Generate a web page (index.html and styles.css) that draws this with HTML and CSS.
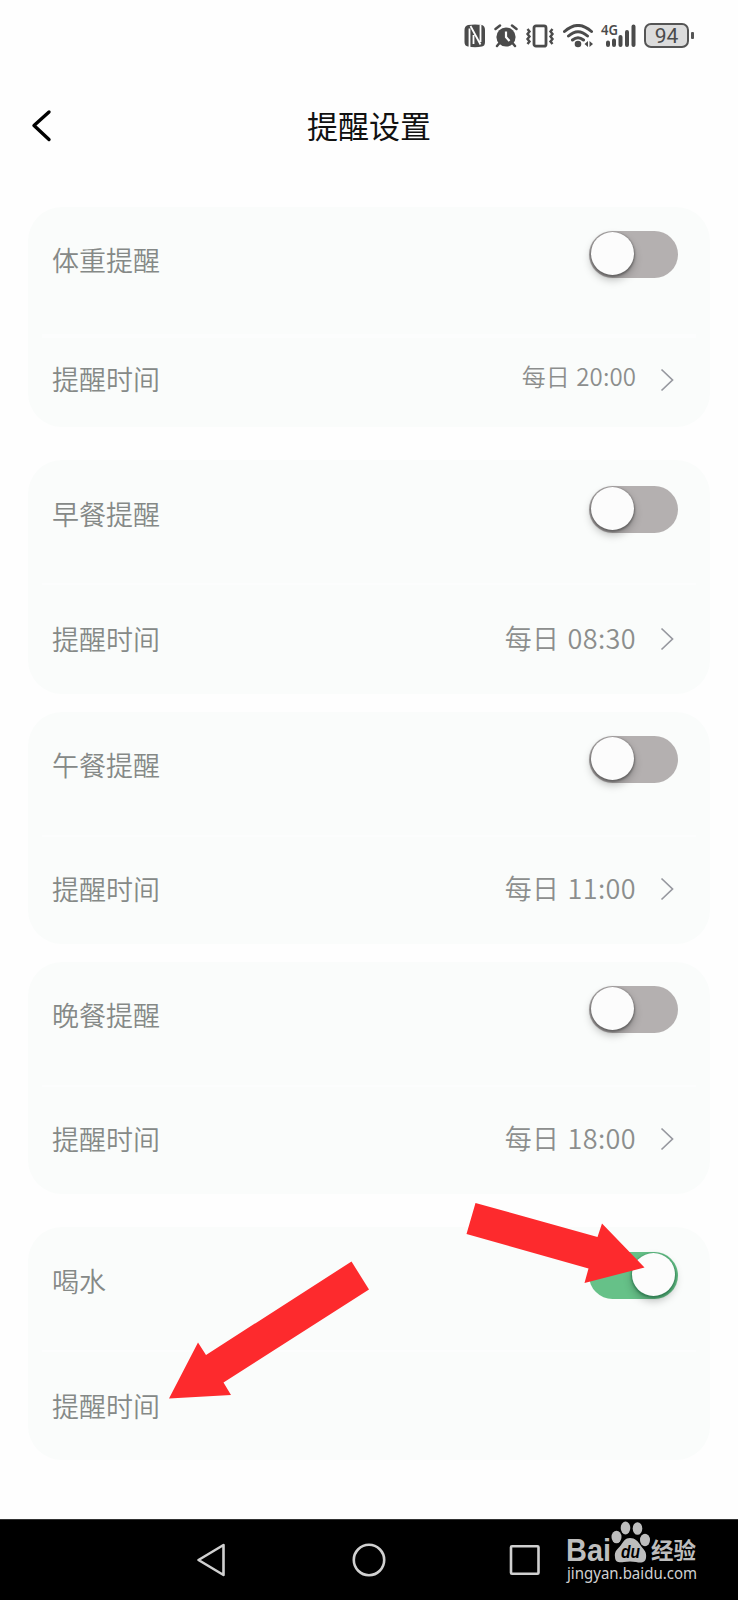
FILE: index.html
```html
<!DOCTYPE html>
<html lang="zh-CN">
<head>
<meta charset="utf-8">
<title>提醒设置</title>
<link rel="stylesheet" href="styles.css">
</head>
<body>
<div class="screen">
  <div class="status">
    <svg class="nfc" width="22" height="24" viewBox="0 0 22 24">
      <path class="ink" d="M4 1 Q11 0 18 1 Q21 2 21 6 V18 Q21 22 18 22.500 Q11 24 4 22.500 Q0.500 22 0.500 18 V6 Q0.500 2 4 1Z"/>
      <path class="gap" d="M5.500 4.500 V23 M6.500 2 L16.500 20.500 M16.500 1 V18 M9.500 11 V20"/>
    </svg>
    <svg class="alarm" width="24" height="24" viewBox="0 0 24 24">
      <circle class="ink" cx="12" cy="13" r="9.600"/>
      <path class="stroke" d="M1.500 5 L6 1.500 M22.500 5 L18 1.500 M5.500 19 L3 22 M18.500 19 L21 22"/>
      <path class="hand" d="M12 7.500 V13 L15.500 17"/>
    </svg>
    <svg class="vibrate" width="30" height="24" viewBox="0 0 30 24">
      <rect class="frame" x="9" y="1.800" width="12" height="20.400" rx="2"/>
      <path class="wave" d="M2.500 5 L4.500 7.500 L2.500 10 L4.500 12.500 L2.500 15 L4.500 17.500 L2.500 20 M27.500 5 L25.500 7.500 L27.500 10 L25.500 12.500 L27.500 15 L25.500 17.500 L27.500 20"/>
    </svg>
    <svg class="wifi" width="31" height="24" viewBox="0 0 31 24">
      <path class="arc" d="M1.500 7.500 Q15 -4.500 28.500 7.500 M5.500 12 Q15 3.500 24.500 12 M9.500 16 Q15 11.500 20.500 16"/>
      <circle class="ink" cx="15" cy="20" r="3.300"/>
      <path class="ink" d="M21.500 20 L25 17 V23Z M30 20 L26.500 17 V23Z"/>
    </svg>
    <svg class="signal" width="36" height="26" viewBox="0 -2 36 26">
      <text class="net" x="0" y="10.500" textLength="17" lengthAdjust="spacingAndGlyphs">4G</text>
      <path class="bars" d="M7 18.500 V21 M13 16.500 V21 M19.500 13 V21 M26 8 V21 M32.500 2.500 V21"/>
    </svg>
    <div class="battery">94</div>
  </div>
  <header class="head">
    <svg class="back" width="22" height="34" viewBox="0 0 22 34"><path d="M18 3 L3 16.500 L18 30.500"/></svg>
    <h1>提醒设置</h1>
  </header>

  <main class="cards">
    <section class="card weight">
      <div class="row top"><span class="label">体重提醒</span><span class="toggle"><i></i></span></div>
      <div class="row time"><span class="label">提醒时间</span><span class="value small">每日 20:00</span><svg class="chev" width="14" height="24" viewBox="0 0 14 24"><path d="M1.500 1.500 L12.500 12 L1.500 22.500"/></svg></div>
    </section>
    <section class="card breakfast">
      <div class="row top"><span class="label">早餐提醒</span><span class="toggle"><i></i></span></div>
      <div class="row time"><span class="label">提醒时间</span><span class="value">每日 08:30</span><svg class="chev" width="14" height="24" viewBox="0 0 14 24"><path d="M1.500 1.500 L12.500 12 L1.500 22.500"/></svg></div>
    </section>
    <section class="card lunch">
      <div class="row top"><span class="label">午餐提醒</span><span class="toggle"><i></i></span></div>
      <div class="row time"><span class="label">提醒时间</span><span class="value">每日 11:00</span><svg class="chev" width="14" height="24" viewBox="0 0 14 24"><path d="M1.500 1.500 L12.500 12 L1.500 22.500"/></svg></div>
    </section>
    <section class="card dinner">
      <div class="row top"><span class="label">晚餐提醒</span><span class="toggle"><i></i></span></div>
      <div class="row time"><span class="label">提醒时间</span><span class="value">每日 18:00</span><svg class="chev" width="14" height="24" viewBox="0 0 14 24"><path d="M1.500 1.500 L12.500 12 L1.500 22.500"/></svg></div>
    </section>
    <section class="card water">
      <div class="row top"><span class="label">喝水</span><span class="toggle on"><i></i></span></div>
      <div class="row time"><span class="label">提醒时间</span></div>
    </section>
  </main>

  <nav class="nav">
    <svg width="32" height="36" viewBox="0 0 32 36"><path d="M28.500 3 V33 L3.500 18Z"/></svg>
    <svg width="36" height="36" viewBox="0 0 36 36"><circle cx="18" cy="18" r="15.200"/></svg>
    <svg width="32" height="36" viewBox="0 0 32 36"><rect x="2" y="4.200" width="27.500" height="27.500" rx="1"/></svg>
  </nav>

  <svg class="arrows" width="738" height="1600" viewBox="0 0 738 1600">
    <path d="M475.500 1203 L597.500 1237 L602 1223.500 L644.500 1267.500 L584.500 1283 L588.500 1268.500 L466.500 1234Z"/>
    <path d="M351.500 1261.500 L369 1289.500 L223.500 1382.500 L231 1395 L169 1398.500 L198 1342.500 L206 1355Z"/>
  </svg>

  <svg class="mark" width="140" height="72" viewBox="0 0 140 72">
    <text class="bai" x="3" y="41" textLength="45" lengthAdjust="spacingAndGlyphs">Bai</text>
    <ellipse cx="53.500" cy="17" rx="5" ry="6.300"/>
    <ellipse cx="62.500" cy="8" rx="4.800" ry="6.500"/>
    <ellipse cx="74.500" cy="8.500" rx="4.800" ry="6.300"/>
    <ellipse cx="82" cy="20" rx="5" ry="6.200"/>
    <path d="M67 18 C72 18 75 21 78 26 C81 30 84 32 83 38 C82 43 78 43 73 42 Q67 41 61 42 C56 43 52 42 52 37 C51 31 55 29 58 25 C61 21 62 18 67 18Z"/>
    <text class="du" x="58" y="38" textLength="19" lengthAdjust="spacingAndGlyphs">du</text>
    <text class="jy" x="88" y="39" textLength="45" lengthAdjust="spacingAndGlyphs">经验</text>
    <text class="url" x="4" y="59" textLength="130" lengthAdjust="spacingAndGlyphs">jingyan.baidu.com</text>
  </svg>
</div>
</body>
</html>
```
FILE: styles.css
```css
* { box-sizing: border-box; }
body {
  margin: 0;
  background: #fff;
  font-family: "Noto Sans CJK SC", sans-serif;
}
.screen {
  position: relative;
  display: flex;
  flex-direction: column;
  width: 738px;
  height: 1600px;
  overflow: hidden;
  background: #fefefe;
}
svg { display: block; flex: none; }

.status {
  display: flex;
  align-items: flex-start;
  height: 86px;
  padding: 24px 0 0 464px;
}
.status svg { fill: none; stroke: none; }
.status .ink { fill: #4b4b4b; }
.gap { stroke: #fefefe; stroke-width: 1.800; }
.alarm { margin-left: 8px; }
.stroke { stroke: #4b4b4b; stroke-width: 2.500; stroke-linecap: round; }
.hand { stroke: #fefefe; stroke-width: 2.200; }
.vibrate { margin-left: 7px; }
.frame { stroke: #4b4b4b; stroke-width: 2.800; }
.wave { stroke: #4b4b4b; stroke-width: 2.400; }
.wifi { margin-left: 8px; }
.arc { stroke: #4b4b4b; stroke-width: 3; stroke-linecap: round; }
.status .signal { margin: -2px 0 0 7px; overflow: visible; }
.net { fill: #4b4b4b; font: 600 15px "Noto Sans", sans-serif; }
.bars { stroke: #4b4b4b; stroke-width: 4; stroke-linecap: round; }
.battery {
  position: relative;
  width: 45px;
  height: 25px;
  margin: -1px 0 0 7px;
  border: 2px solid #555;
  border-radius: 7px;
  background: #dcdcdc;
  color: #4b4b4b;
  font: 400 21px/22px Roboto, sans-serif;
  text-align: center;
}
.battery::after {
  content: "";
  position: absolute;
  left: 45px;
  top: 7px;
  width: 3px;
  height: 7px;
  border-radius: 1px;
  background: #555;
}

.head {
  display: grid;
  grid-template-columns: 100px 1fr 100px;
  align-items: center;
  height: 80px;
}
.back { margin-left: 31px; fill: none; stroke: #000; stroke-width: 3.400; stroke-linecap: round; stroke-linejoin: round; }
h1 {
  margin: -2px 0 0;
  color: #111;
  font-size: 31px;
  font-weight: 400;
  line-height: 40px;
  text-align: center;
}

.cards {
  display: flex;
  flex-direction: column;
  height: 1353px;
  padding: 41px 28px 0;
}
.card {
  display: flex;
  flex-direction: column;
  flex: none;
  height: 232px;
  border-radius: 34px;
  background: #fafcfb;
}
.weight { height: 220px; }
.breakfast { margin-top: 33px; height: 234px; }
.lunch { margin-top: 18px; }
.dinner { margin-top: 18px; }
.water { margin-top: 33px; height: 233px; }
.row { display: flex; padding: 0 32px 0 24px; }
.top {
  position: relative;
  justify-content: space-between;
  height: 125px;
  padding-top: 24px;
}
.top::after {
  content: "";
  position: absolute;
  left: 14px;
  right: 14px;
  bottom: 0;
  height: 2px;
  background: #fcfdfd;
}
.weight .top { height: 131px; }
.weight .top::after { height: 4px; }
.breakfast .top { padding-top: 26px; }
.water .top { padding-top: 25px; }
.label {
  color: #858987;
  font-size: 27px;
  font-weight: 350;
  line-height: 40px;
}
.top .label { margin-top: 9px; }
.breakfast .top .label { margin-top: 8px; }
.time { flex: 1; align-items: flex-start; padding-top: 34px; }
.weight .time { padding-top: 21px; }
.lunch .time, .dinner .time { padding-top: 32px; }
.time .label { flex: 1; }
.value {
  color: #8c8e8d;
  font-size: 27px;
  font-weight: 350;
  line-height: 38px;
  letter-spacing: .4px;
  word-spacing: 1.500px;
}
.value.small { font-size: 24px; line-height: 34px; letter-spacing: .1px; word-spacing: 1px; }
.chev { margin: 8px 4px 0 24px; fill: none; stroke: #96989f; stroke-width: 1.700; }
.weight .chev { margin-top: 9px; }

.toggle {
  position: relative;
  width: 89px;
  height: 47px;
  border-radius: 24px;
  background: #b4b0b0;
}
.toggle i {
  position: absolute;
  left: 2px;
  top: 1px;
  width: 43px;
  height: 43px;
  border-radius: 50%;
  background: #fcfcfc;
  box-shadow: 0 1px 2px 1px rgba(60, 60, 60, .5), 0 5px 9px rgba(0, 0, 0, .25);
}
.toggle.on { background: #66c188; }
.toggle.on i { left: 43px; box-shadow: 0 1px 2px 1px rgba(20, 100, 60, .5), 0 5px 9px rgba(0, 0, 0, .25); }

.nav {
  display: flex;
  gap: 124px;
  height: 81px;
  padding: 22px 0 0 195px;
  border-top: 1px solid #333;
  background: #000;
}
.nav svg { fill: none; stroke: #d0d0d0; stroke-width: 2.600; stroke-linejoin: round; }
.nav svg:nth-child(3) { margin-left: -2px; }

.arrows { position: absolute; left: 0; top: 0; fill: #fd2a2d; pointer-events: none; }
.mark { position: absolute; left: 563px; top: 1520px; fill: #bdbdbd; }
.bai { font: 700 31px "Liberation Sans", sans-serif; }
.du { fill: #000; font: italic 700 18px "Liberation Sans", sans-serif; }
.jy { font: 700 23px "Noto Sans CJK SC", sans-serif; }
.url { fill: #d0d0d0; font: 400 16px "Noto Sans", sans-serif; }
```
